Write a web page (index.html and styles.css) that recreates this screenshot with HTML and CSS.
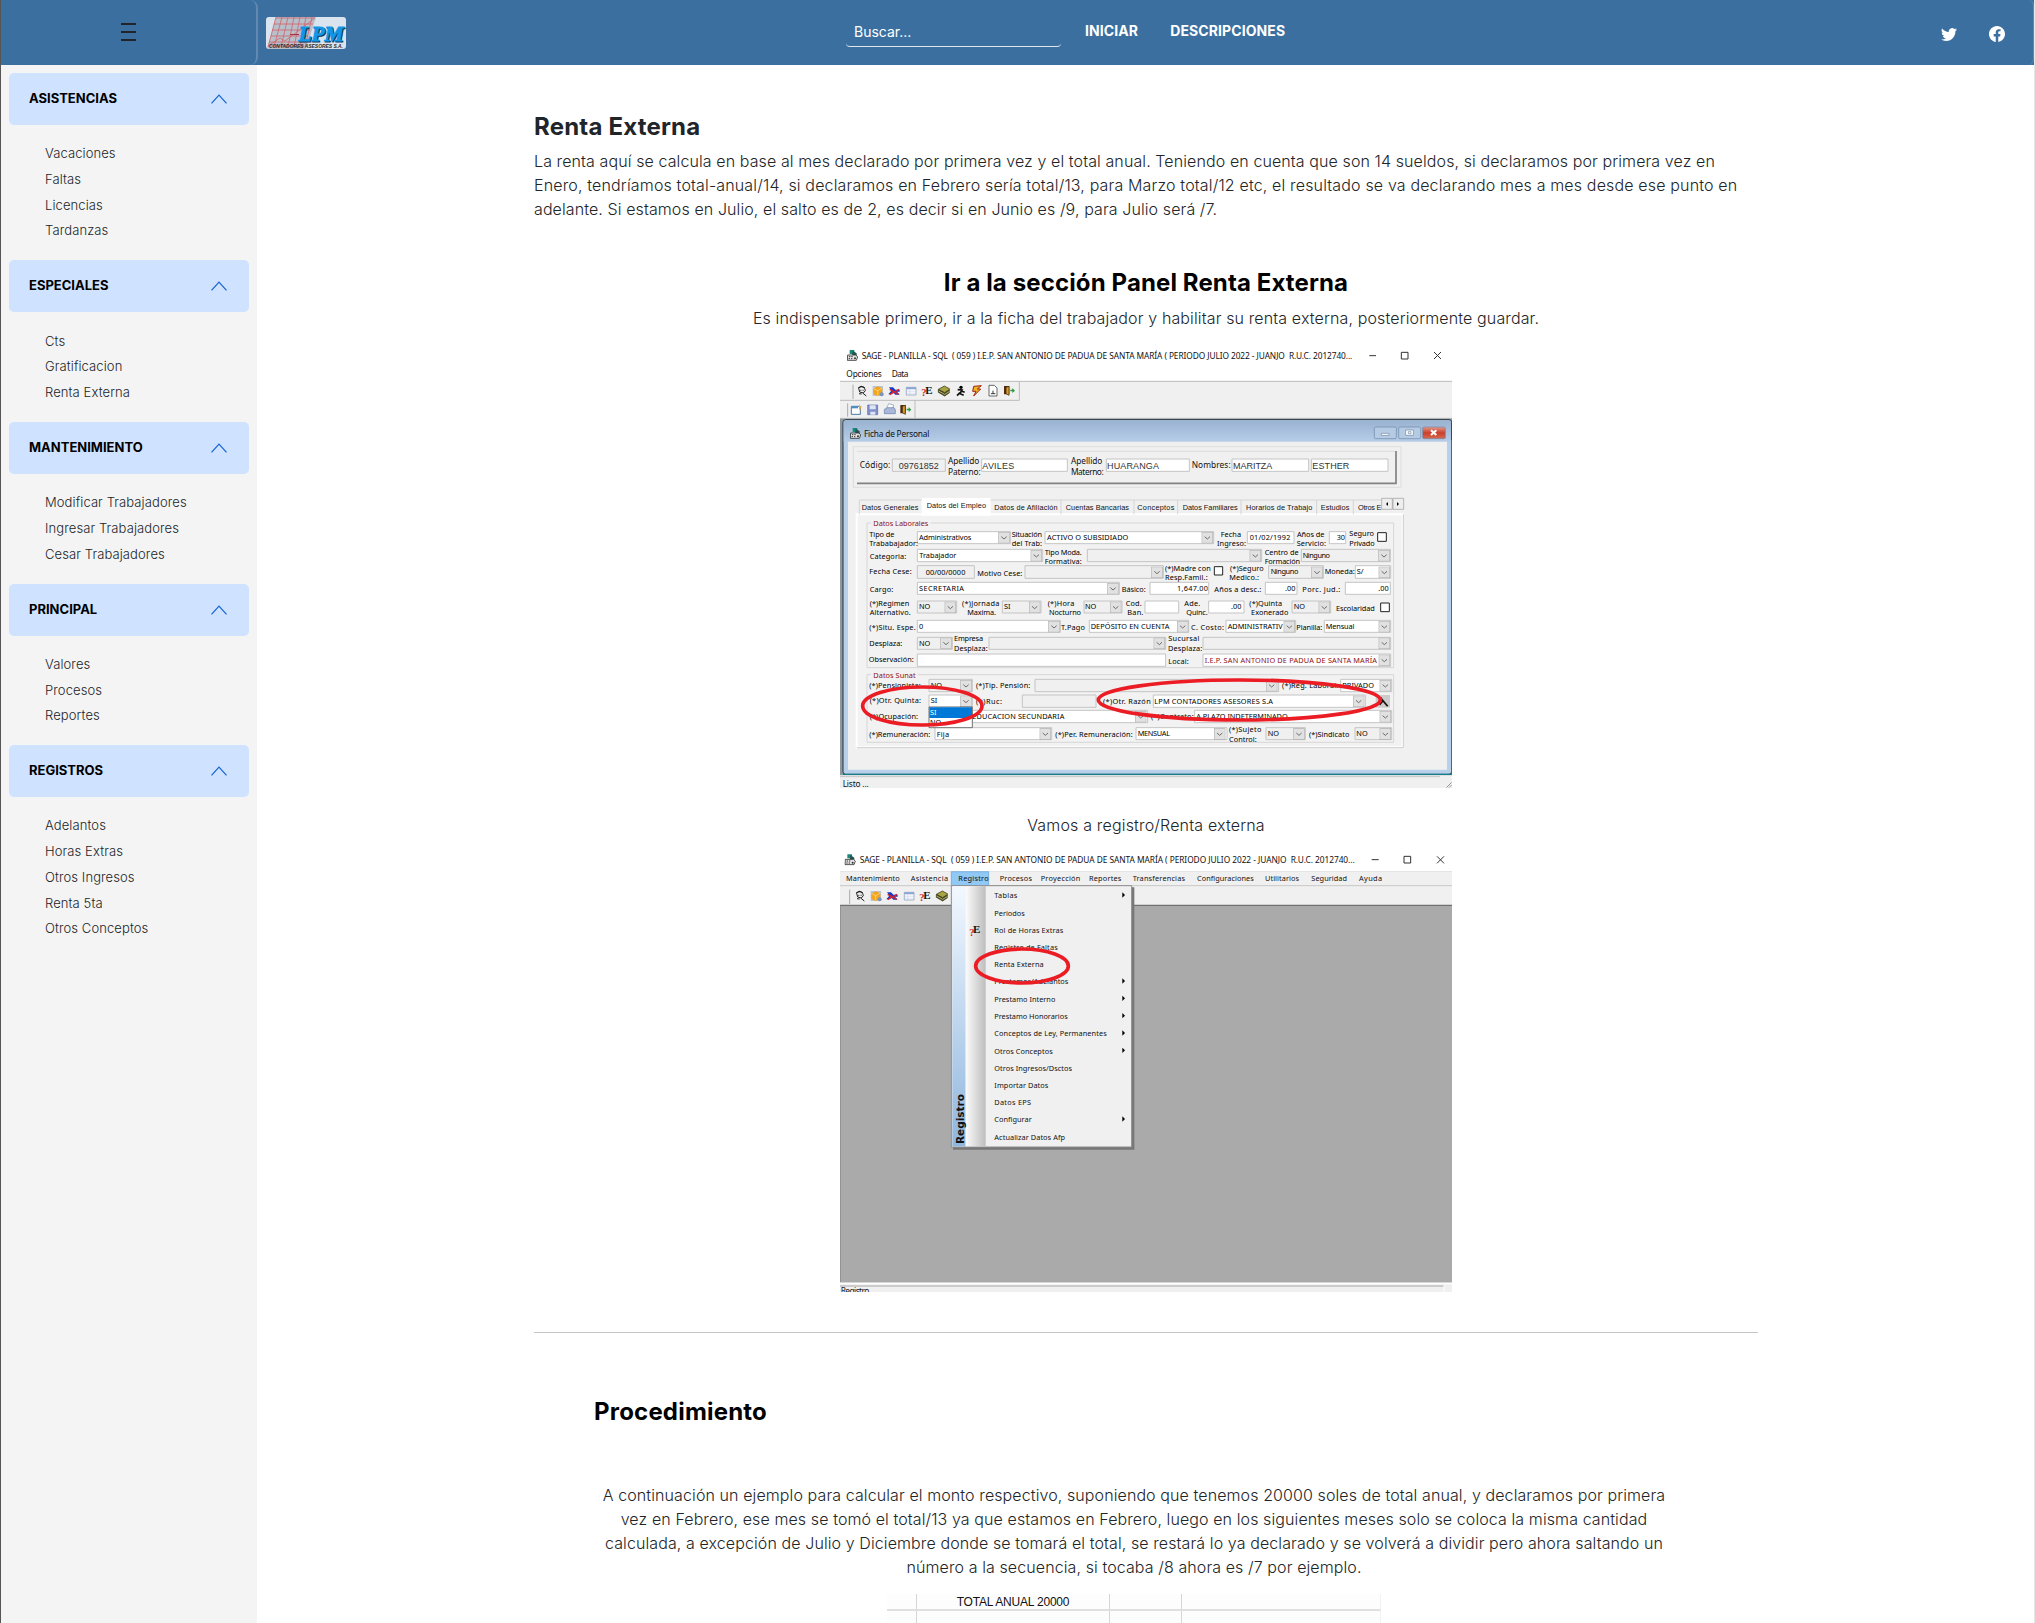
FILE: index.html
```html
<!DOCTYPE html>
<html lang="es">
<head>
<meta charset="utf-8">
<title>Renta Externa</title>
<link rel="stylesheet" href="styles.css">
</head>
<body>
<svg class="defs" aria-hidden="true">
  <defs>
    <symbol id="chevron" viewBox="0 0 16 16"><path fill="none" stroke="#1463d6" stroke-width="1.200" d="M.5 12.3 8 4.200l7.500 8.100"/></symbol>
    <symbol id="dd" viewBox="0 0 34 34"><path d="M0 0h34v34H0z" fill="#e1e1e1" stroke="#a9a9a9" stroke-width="3"/><path d="m9 14 8 7 8-7" fill="none" stroke="#555" stroke-width="2.500"/></symbol>
    <symbol id="appicon" viewBox="0 0 36 36"><path d="M9 2h14v12H9z" fill="#178a7a"/><path d="m18 4 12 8v8h-14z" fill="#28544f"/><path d="M3 17h25l5 6-4 10H2z" fill="#e4e4e4" stroke="#333" stroke-width="2.500"/><path d="M7 22h14M6 28h14" stroke="#333" stroke-width="3" stroke-dasharray="4 3"/><circle cx="25" cy="27" r="3" fill="#333"/></symbol>
    <symbol id="door" viewBox="0 0 36 32"><path d="M2 2h16v25H2z" fill="#542b12"/><path d="m8 6 9-3v27l-9-5z" fill="#e39a20" stroke="#222" stroke-width="2"/><path d="M21 13h6v-5l8 8-8 7v-5h-6z" fill="#2a9b43"/></symbol>
    <symbol id="tools" viewBox="0 0 280 40">
      <path d="M7 12q8-12 18 0l2 7-6 7-11-3z" fill="#eee" stroke="#222" stroke-width="3"/><path d="M6 11q10-8 19 0" fill="none" stroke="#222" stroke-width="4"/><path d="M12 18h3M19 18h3M8 28l8 1M20 27l10 8" stroke="#222" stroke-width="3"/>
      <path d="M49 5h31v30H49z" fill="#b9c5d6"/><path d="m51 13 13-7 14 6v17l-14 6-13-6z" fill="#f3a51c"/><path d="m52 13 12 6 13-7M64 19v14" stroke="#ffe2a0" stroke-width="2" fill="none"/><circle cx="76" cy="30" r="6" fill="#7894bd"/>
      <path d="M98 9h12l7 7h13v6h-8l8 9h-13l-7-7-8 6h-6l9-11z" fill="#1638c8"/><path d="m100 31 28-16M100 15l27 15" stroke="#d4232c" stroke-width="4"/>
      <path d="M150 9h29v23h-29z" fill="#f7faff" stroke="#8093b4" stroke-width="2"/><path d="M150 9h29v6h-29z" fill="#8aa6d4"/><path d="M160 15v17M150 21h29M150 27h29" stroke="#b0bdd2"/>
      <text class="q" x="195" y="36">?</text><text class="e" x="207" y="29">E</text>
      <path d="m246 15 18-10 17 9-16 11z" fill="#a7a444" stroke="#28280c" stroke-width="2"/><path d="m246 16 19 10 16-10v8l-16 11-19-11z" fill="#54551b" stroke="#28280c" stroke-width="2"/><path d="m247 20 18 10 15-9" fill="none" stroke="#d8d8a0" stroke-width="2"/>
    </symbol>
    <linearGradient id="caption" x1="0" y1="0" x2="0" y2="1"><stop offset="0" stop-color="#9ab3d1"/><stop offset="1" stop-color="#b5cde8"/></linearGradient>
    <linearGradient id="close" x1="0" y1="0" x2="0" y2="1"><stop offset="0" stop-color="#e59a8c"/><stop offset=".5" stop-color="#c9402c"/><stop offset="1" stop-color="#d8694f"/></linearGradient>
    <linearGradient id="menuband" x1="0" y1="0" x2="0" y2="1"><stop offset="0" stop-color="#f2f8ff"/><stop offset="1" stop-color="#8fb6de"/></linearGradient>
    <linearGradient id="menugutter"><stop offset="0" stop-color="#fcfcfc"/><stop offset="1" stop-color="#bdbdbd"/></linearGradient>
  </defs>
</svg>

<header class="topbar">
  <div class="topbar-side"><button class="burger" aria-label="Menu"><span></span><span></span><span></span></button></div>
  <div class="topbar-main">
    <svg class="logo" viewBox="0 0 80 32" role="img" aria-label="LPM Contadores Asesores">
      <rect width="80" height="32" rx="3" fill="#dae4ee"/>
      <path d="M10 0h40L40 32H1z" fill="#b9c0ca"/>
      <path d="M10 1h39M8 7h39M6 13h38M5 19h37M3 25h36M2 29h36M10 0 2 30M16 0 8 30M22 0l-7 30M28 0l-6 30M34 0l-6 30M40 0l-6 30M46 0l-7 30M2 29l12-8 5 3L49 1" fill="none" stroke="#d0626c" stroke-width=".8"/>
      <path d="M24 17.500h9" stroke="#9a3744"/>
      <text class="logo-shadow" x="33.500" y="25" textLength="45" lengthAdjust="spacingAndGlyphs">LPM</text>
      <text class="logo-name" x="32.500" y="24" textLength="45" lengthAdjust="spacingAndGlyphs">LPM</text>
      <text class="logo-sub" x="3" y="31" textLength="74" lengthAdjust="spacingAndGlyphs">CONTADORES ASESORES S.A.</text>
    </svg>
    <input class="search" type="text" placeholder="Buscar...">
    <nav class="topnav"><a>INICIAR</a><a>DESCRIPCIONES</a></nav>
    <div class="social">
      <svg width="16" height="16" viewBox="0 0 16 16" fill="#fff"><path d="M5.026 15c6.038 0 9.341-5.003 9.341-9.334 0-.14 0-.282-.006-.422A6.685 6.685 0 0 0 16 3.542a6.658 6.658 0 0 1-1.889.518 3.301 3.301 0 0 0 1.447-1.817 6.533 6.533 0 0 1-2.087.793A3.286 3.286 0 0 0 7.875 6.030a9.325 9.325 0 0 1-6.767-3.429 3.289 3.289 0 0 0 1.018 4.382A3.323 3.323 0 0 1 .64 6.575v.045a3.288 3.288 0 0 0 2.632 3.218 3.203 3.203 0 0 1-.865.115 3.230 3.230 0 0 1-.614-.057 3.283 3.283 0 0 0 3.067 2.277A6.588 6.588 0 0 1 .780 13.580a6.320 6.320 0 0 1-.780-.045A9.344 9.344 0 0 0 5.026 15z"/></svg>
      <svg width="16" height="16" viewBox="0 0 16 16" fill="#fff"><path d="M16 8.049c0-4.446-3.582-8.050-8-8.050C3.580 0-.002 3.603-.002 8.050c0 4.017 2.926 7.347 6.750 7.951v-5.625h-2.030V8.050H6.750V6.275c0-2.017 1.195-3.131 3.022-3.131.876 0 1.791.157 1.791.157v1.980h-1.009c-.993 0-1.303.621-1.303 1.258v1.510h2.218l-.354 2.326H9.250V16c3.824-.604 6.750-3.934 6.750-7.951z"/></svg>
    </div>
  </div>
</header>

<div class="layout">
  <aside class="sidebar">
    <section><h2><span>ASISTENCIAS</span><svg><use href="#chevron"/></svg></h2><ul><li>Vacaciones</li><li>Faltas</li><li>Licencias</li><li>Tardanzas</li></ul></section>
    <section><h2><span>ESPECIALES</span><svg><use href="#chevron"/></svg></h2><ul><li>Cts</li><li>Gratificacion</li><li>Renta Externa</li></ul></section>
    <section><h2><span>MANTENIMIENTO</span><svg><use href="#chevron"/></svg></h2><ul><li>Modificar Trabajadores</li><li>Ingresar Trabajadores</li><li>Cesar Trabajadores</li></ul></section>
    <section><h2><span>PRINCIPAL</span><svg><use href="#chevron"/></svg></h2><ul><li>Valores</li><li>Procesos</li><li>Reportes</li></ul></section>
    <section><h2><span>REGISTROS</span><svg><use href="#chevron"/></svg></h2><ul><li>Adelantos</li><li>Horas Extras</li><li>Otros Ingresos</li><li>Renta 5ta</li><li>Otros Conceptos</li></ul></section>
  </aside>

  <main class="content">
    <h1>Renta Externa</h1>
    <p class="intro">La renta aquí se calcula en base al mes declarado por primera vez y el total anual. Teniendo en cuenta que son 14 sueldos, si declaramos por primera vez en<br><span class="loose">Enero, tendríamos total-anual/14, si declaramos en Febrero sería total/13, para Marzo total/12 etc, el resultado se va declarando mes a mes desde ese punto en</span><br>adelante. Si estamos en Julio, el salto es de 2, es decir si en Junio es /9, para Julio será /7.</p>
    <h3 class="step-title">Ir a la sección Panel Renta Externa</h3>
    <p class="step-text">Es indispensable primero, ir a la ficha del trabajador y habilitar su renta externa, posteriormente guardar.</p>

    <svg class="shot" viewBox="15 18 1836 1326">
      <path d="M15 18h1836v1326H15z" fill="#f0f0f0"/>
      <path d="M15 18h1836v105H15z" fill="#fff"/>
      <path d="M15 124h1836M15 181h538v-56M15 235h1836M240 181v54" stroke="#bbb" stroke-width="3" fill="none"/>
      <use href="#appicon" x="35" y="28" width="36" height="36"/>
      <text class="ui" x="80" y="56" textLength="1472">SAGE - PLANILLA - SQL&#160; ( 059 ) I.E.P. SAN ANTONIO DE PADUA DE SANTA MARÍA ( PERIODO JULIO 2022 - JUANJO&#160; R.U.C. 2012740...</text>
      <path d="M1603 47h20M1699 37h20v20h-20zM1797 36l21 21m0-21-21 21" stroke="#333" stroke-width="3" fill="none"/>
      <text class="ui" x="34" y="110" textLength="106">Opciones</text><text class="ui" x="170" y="110" textLength="50">Data</text>
      <path d="M54 134v43M38 190v40" stroke="#aaa" stroke-width="3"/>
      <use href="#tools" x="64" y="133" width="280" height="40"/>
      <circle cx="378" cy="142" r="5"/><path d="m368 149 13 1-6 11 11 5M366 167l9-9M379 153l10 4" fill="none" stroke="#111" stroke-width="5"/>
      <path d="m416 139 23-2-12 10h10l-21 21 7-14h-10z" fill="#ecb51d" stroke="#a2221b" stroke-width="3"/>
      <path d="M462 136h16l8 8v24h-24z" fill="#fff" stroke="#222" stroke-width="2"/><path d="M468 161h13m-7-9v9" stroke="#333" stroke-width="3"/>
      <use href="#door" x="505" y="136" width="36" height="32"/>
      <path d="M49 199h27v24H49z" fill="#fff" stroke="#4677a3" stroke-width="3"/><path d="M49 199h20v6H49z" fill="#4c90bf"/><path d="m72 193 3 6 6 1-5 5 1 7-5-3" fill="#ecae37"/>
      <path d="M98 195h30v29H98z" fill="#8190cb" stroke="#596aa8" stroke-width="2"/><path d="M104 196h18v12h-18zM106 215h15v9h-15z" fill="#dfe5f3"/>
      <path d="m155 204 6-13 15 4-3 12z" fill="#fff" stroke="#7e90b8" stroke-width="2"/><path d="m148 208 10-5h19l4 6v12h-33z" fill="#aab8d8" stroke="#657caf" stroke-width="2"/>
      <use href="#door" x="194" y="193" width="36" height="32"/>
      <path d="M15 236h1836v1070H15z" fill="#8d979e"/>
      <rect x="24" y="239" width="1826" height="1064" rx="8" fill="#b8d0ea" stroke="#24333b" stroke-width="3"/>
      <path d="M26 242h1822v63H26z" fill="url(#caption)"/><path d="M24 1303h1826V300" fill="none" stroke="#15808a" stroke-width="4"/>
      <path d="M39 305h1797v984H39z" fill="#f0f0f0"/>
      <use href="#appicon" x="44" y="262" width="36" height="36"/><text class="ui" x="87" y="290" textLength="196">Ficha de Personal</text>
      <g stroke="#6d86a3" stroke-width="2"><rect x="1618" y="261" width="66" height="35" rx="4" fill="#b5cbe3"/><rect x="1691" y="261" width="66" height="35" rx="4" fill="#b5cbe3"/><rect x="1763" y="261" width="68" height="35" rx="4" fill="url(#close)"/><path d="M1639 280h23v6h-23zM1712 270h23v16h-23zM1720 275h8v6h-8z" fill="#fff"/></g>
      <path d="m1788 271 16 14m0-14-16 14" stroke="#fff" stroke-width="6"/>
      <path d="M55 320h1643v122H55zM66 334h1617" fill="none" stroke="#ddd" stroke-width="3"/><path d="M66 430h1617v-97" fill="none" stroke="#808080" stroke-width="5"/>
      <text class="ui" x="74" y="384" textLength="92">Código:</text><text class="ui" x="339" y="373" textLength="94">Apellido</text><text class="ui" x="339" y="405" textLength="98">Paterno:</text><text class="ui" x="708" y="373" textLength="94">Apellido</text><text class="ui" x="708" y="405" textLength="98">Materno:</text><text class="ui" x="1070" y="384" textLength="117">Nombres:</text>
      <path class="fld off" d="M172 357h159v37H172z"/><path class="fld" d="M440 357h257v37H440zM814 357h249v37H814zM1191 357h230v37h-230zM1429 357h230v37h-230z"/>
      <g class="arial"><text x="191" y="386" textLength="120">09761852</text><text x="442" y="386" textLength="96">AVILES</text><text x="816" y="386" textLength="156">HUARANGA</text><text x="1194" y="386" textLength="118">MARITZA</text><text x="1432" y="386" textLength="111">ESTHER</text></g>
      <path d="M65 523h1638v699H65z" fill="#f2f2f2" stroke="#fff" stroke-width="6"/><path d="M66 1223h1639V523" fill="none" stroke="#ccc" stroke-width="3"/>
      <path d="M73 480v43M678 480v43M897 480v43M1028 480v43M1218 480v43M1445 480v43M1555 480v43M73 480h1567" stroke="#d5d5d5" stroke-width="3"/><path d="M260 474h207v53H260z" fill="#fff"/>
      <g class="tab"><text x="80" y="509" textLength="170">Datos Generales</text><text x="275" y="505" textLength="178">Datos del Empleo</text><text x="478" y="509" textLength="190">Datos de Afiliación</text><text x="692" y="509" textLength="190">Cuentas Bancarias</text><text x="907" y="509" textLength="111">Conceptos</text><text x="1043" y="509" textLength="165">Datos Familiares</text><text x="1233" y="509" textLength="199">Horarios de Trabajo</text><text x="1457" y="509" textLength="86">Estudios</text><text x="1569" y="509" textLength="70">Otros E</text></g>
      <path d="M1640 475h32v33h-32zM1674 475h32v33h-32z" fill="#eee" stroke="#999" stroke-width="2"/><path d="m1659 486-6 6 6 6zM1686 486l6 6-6 6z"/>
      <path d="M96 549h1580v434H96zM96 1004h1580v203H96z" fill="none" stroke="#d6d6d6" stroke-width="3"/><path d="M108 540h178v20H108zM108 994h140v20H108z" fill="#f2f2f2"/>
      <path class="fld" d="M247 575h279v36H247zM630 575h506v36H630zM1237 575h140v36h-140zM1483 575h49v36h-49zM247 628h376v37H247zM1561 677h106v38h-106zM247 727h606v36H247zM945 727h176v36H945zM1291 727h95v36h-95zM1531 727h135v36h-135zM930 783h101v36H930zM1121 783h106v36h-106zM247 841h429v36H247zM763 841h298v36H763zM1173 841h209v36h-209zM1468 841h199v36h-199zM247 942h745v37H247zM1104 942h563v37h-563zM1517 1018h153v37h-153zM282 1065h130v37H282zM955 1065h636v37H955zM412 1111h526v37H412zM1079 1111h591v37h-591zM300 1163h350v36H300zM903 1163h273v36H903z"/>
      <path class="fld off" d="M757 628h523v37H757zM1399 628h267v37h-267zM247 677h171v38H247zM570 677h415v38H570zM1301 677h164v38h-164zM247 783h118v36H247zM502 783h116v36H502zM747 783h114v36H747zM1371 783h116v36h-116zM247 892h105v36H247zM462 892h530v36H462zM1104 892h563v36h-563zM282 1018h130v37H282zM600 1018h731v37H600zM562 1065h221v37H562zM1293 1163h118v36h-118zM1560 1163h110v36h-110z"/>
      <g><use href="#dd" x="490" y="576" width="34" height="34"/><use href="#dd" x="1100" y="576" width="34" height="34"/><use href="#dd" x="587" y="630" width="34" height="34"/><use href="#dd" x="1244" y="630" width="34" height="34"/><use href="#dd" x="1630" y="630" width="34" height="34"/><use href="#dd" x="949" y="680" width="34" height="34"/><use href="#dd" x="1429" y="680" width="34" height="34"/><use href="#dd" x="1631" y="680" width="34" height="34"/><use href="#dd" x="817" y="729" width="34" height="34"/><use href="#dd" x="329" y="785" width="34" height="34"/><use href="#dd" x="582" y="785" width="34" height="34"/><use href="#dd" x="825" y="785" width="34" height="34"/><use href="#dd" x="1451" y="785" width="34" height="34"/><use href="#dd" x="640" y="843" width="34" height="34"/><use href="#dd" x="1026" y="843" width="34" height="34"/><use href="#dd" x="1346" y="843" width="34" height="34"/><use href="#dd" x="1631" y="843" width="34" height="34"/><use href="#dd" x="316" y="893" width="34" height="34"/><use href="#dd" x="956" y="893" width="34" height="34"/><use href="#dd" x="1631" y="893" width="34" height="34"/><use href="#dd" x="1631" y="944" width="34" height="34"/><use href="#dd" x="376" y="1020" width="34" height="34"/><use href="#dd" x="1293" y="1020" width="34" height="34"/><use href="#dd" x="1634" y="1020" width="34" height="34"/><use href="#dd" x="376" y="1067" width="34" height="34"/><use href="#dd" x="1554" y="1067" width="34" height="34"/><use href="#dd" x="900" y="1113" width="34" height="34"/><use href="#dd" x="1634" y="1113" width="34" height="34"/><use href="#dd" x="614" y="1165" width="34" height="34"/><use href="#dd" x="1137" y="1165" width="34" height="34"/><use href="#dd" x="1375" y="1165" width="34" height="34"/><use href="#dd" x="1634" y="1165" width="34" height="34"/></g>
      <path d="M1628 578h26v26h-26zM1138 680h25v25h-25zM1637 789h26v26h-26z" fill="#fff" stroke="#222" stroke-width="3"/>
      <g class="maroon"><text x="115" y="556" textLength="165">Datos Laborales</text><text x="115" y="1012" textLength="127">Datos Sunat</text><text x="1109" y="967" textLength="517">I.E.P. SAN ANTONIO DE PADUA DE SANTA MARÍA</text></g>
      <g class="frm">
        <text x="103" y="588" textLength="75">Tipo de</text><text x="103" y="617" textLength="146">Trababajador:</text><text x="252" y="599" textLength="157">Administrativos</text><text x="530" y="588" textLength="91">Situación</text><text x="530" y="617" textLength="91">del Trab:</text><text x="636" y="599" textLength="244">ACTIVO O SUBSIDIADO</text><text x="1157" y="588" textLength="61">Fecha</text><text x="1146" y="617" textLength="87">Ingreso:</text><text x="1244" y="599" textLength="122">01/02/1992</text><text x="1386" y="588" textLength="82">Años de</text><text x="1385" y="617" textLength="88">Servicio:</text><text x="1505" y="599">30</text><text x="1543" y="587" textLength="74">Seguro</text><text x="1543" y="616" textLength="76">Privado</text>
        <text x="104" y="655" textLength="110">Categoria:</text><text x="253" y="653" textLength="111">Trabajador</text><text x="629" y="642" textLength="111">Tipo Moda.</text><text x="629" y="670" textLength="111">Formativa:</text><text x="1289" y="642" textLength="102">Centro de</text><text x="1289" y="670" textLength="106">Formación</text><text x="1403" y="653" textLength="82">Ninguno</text>
        <text x="103" y="701" textLength="127">Fecha Cese:</text><text x="272" y="702" textLength="119">00/00/0000</text><text x="427" y="706" textLength="135">Motivo Cese:</text><text x="990" y="690" textLength="137">(*)Madre con</text><text x="990" y="718" textLength="128">Resp.Famil.:</text><text x="1185" y="690" textLength="101">(*)Seguro</text><text x="1183" y="718" textLength="89">Medico.:</text><text x="1307" y="701" textLength="83">Ninguno</text><text x="1469" y="701" textLength="90">Moneda:</text><text x="1565" y="701">S/</text>
        <text x="104" y="755" textLength="71">Cargo:</text><text x="252" y="751" textLength="135">SECRETARIA</text><text x="860" y="755" textLength="72">Básico:</text><text x="1026" y="751" textLength="93">1,647.00</text><text x="1138" y="755" textLength="141">Años a desc.:</text><text x="1350" y="751">.00</text><text x="1402" y="755" textLength="114">Porc. Jud.:</text><text x="1630" y="751">.00</text>
        <text x="104" y="797" textLength="119">(*)Regimen</text><text x="104" y="824" textLength="123">Alternativo.</text><text x="252" y="806">NO</text><text x="381" y="797" textLength="112">(*)Jornada</text><text x="397" y="824" textLength="86">Maxima.</text><text x="507" y="806">SI</text><text x="638" y="797" textLength="80">(*)Hora</text><text x="642" y="824" textLength="96">Nocturno</text><text x="750" y="806">NO</text><text x="872" y="797" textLength="48">Cod.</text><text x="877" y="824" textLength="48">Ban.</text><text x="1048" y="797" textLength="48">Ade.</text><text x="1054" y="824" textLength="64">Quinc.</text><text x="1188" y="806">.00</text><text x="1243" y="797" textLength="98">(*)Quinta</text><text x="1248" y="824" textLength="112">Exonerado</text><text x="1376" y="806">NO</text><text x="1503" y="810" textLength="116">Escolaridad</text>
        <text x="103" y="867" textLength="139">(*)Situ. Espe.</text><text x="252" y="864">0</text><text x="678" y="867" textLength="72">T.Pago</text><text x="767" y="864" textLength="236">DEPÓSITO EN CUENTA</text><text x="1068" y="867" textLength="99">C. Costo:</text><text x="1178" y="864" textLength="165">ADMINISTRATIV</text><text x="1384" y="867" textLength="78">Planilla:</text><text x="1472" y="864" textLength="86">Mensual</text>
        <text x="103" y="917" textLength="99">Desplaza:</text><text x="252" y="915">NO</text><text x="357" y="902" textLength="87">Empresa</text><text x="357" y="930" textLength="101">Desplaza:</text><text x="1000" y="902" textLength="93">Sucursal</text><text x="999" y="930" textLength="103">Desplaza:</text>
        <text x="101" y="965" textLength="135">Observación:</text><text x="1000" y="969" textLength="61">Local:</text>
        <text x="103" y="1043" textLength="154">(*)Pensionista:</text><text x="287" y="1041">NO</text><text x="423" y="1043" textLength="163">(*)Tip. Pensión:</text><text x="1341" y="1043" textLength="169">(*)Reg. Laboral:</text><text x="1522" y="1041" textLength="95">PRIVADO</text>
        <text x="104" y="1088" textLength="154">(*)Otr. Quinta:</text><text x="287" y="1088">SI</text><text x="423" y="1091" textLength="78">(*)Ruc:</text><text x="804" y="1091" textLength="143">(*)Otr. Razón</text><text x="958" y="1090" textLength="356">LPM CONTADORES ASESORES S.A</text>
        <text x="104" y="1134" textLength="145">(*)Ocupación:</text><text x="412" y="1136" textLength="276">EDUCACION SECUNDARIA</text><text x="948" y="1134" textLength="128">(*)Contrato:</text><text x="1084" y="1136" textLength="274">A PLAZO INDETERMINADO</text>
        <text x="103" y="1190" textLength="183">(*)Remuneración:</text><text x="305" y="1188" textLength="37">Fija</text><text x="661" y="1190" textLength="232">(*)Per. Remuneración:</text><text x="908" y="1185" textLength="97">MENSUAL</text><text x="1182" y="1175" textLength="97">(*)Sujeto</text><text x="1182" y="1203" textLength="83">Control:</text><text x="1298" y="1185">NO</text><text x="1422" y="1190" textLength="121">(*)Sindicato</text><text x="1564" y="1185">NO</text>
      </g>
      <path d="M1622 1065h43v38h-43z" fill="#ccc"/><path d="m1636 1072 8 10 14 17M1644 1082l-10 12" stroke="#111" stroke-width="5" fill="none"/>
      <path d="M282 1101h130v62H282z" fill="#fff" stroke="#333" stroke-width="2"/><path d="M283 1102h128v32H283z" fill="#0078d7"/>
      <g class="frm"><text class="sel" x="285" y="1124">SI</text><text x="285" y="1154">NO</text></g>
      <ellipse class="mark" cx="262" cy="1098" rx="179" ry="57"/><ellipse class="mark" cx="1213" cy="1080" rx="423" ry="60"/>
      <path d="M15 1307h1836v37H15z" fill="#f0f0f0"/><path d="M15 1310h1800" stroke="#c4c4c4" stroke-width="3"/><text class="ui" x="23" y="1340" textLength="78">Listo ...</text><path d="m1834 1343 16-16m-8 16 8-8" stroke="#999" stroke-width="3"/>
    </svg>

    <p class="caption">Vamos a registro/Renta externa</p>

    <svg class="shot" viewBox="15 15 1836 1326">
      <path d="M15 15h1836v1326H15z" fill="#aaa"/><path d="M15 15h1836v64H15z" fill="#fff"/><path d="M15 79h1836v101H15z" fill="#f0f0f0"/>
      <path d="M15 122h1836" stroke="#c8c8c8" stroke-width="3"/><path d="M15 181h1836" stroke="#707070" stroke-width="4"/><path d="M15 181v1130" stroke="#888" stroke-width="4"/>
      <use href="#appicon" x="28" y="26" width="36" height="36"/>
      <text class="ui" x="74" y="54" textLength="1485">SAGE - PLANILLA - SQL&#160; ( 059 ) I.E.P. SAN ANTONIO DE PADUA DE SANTA MARÍA ( PERIODO JULIO 2022 - JUANJO&#160; R.U.C. 2012740...</text>
      <path d="M1610 44h21M1707 34h20v20h-20zM1806 34l21 21m0-21-21 21" stroke="#333" stroke-width="3" fill="none"/>
      <path d="M349 80h112v42H349z" fill="#90c8f6" stroke="#5d9fd6" stroke-width="2"/>
      <g class="menu"><text x="33" y="106" textLength="161">Mantenimiento</text><text x="227" y="106" textLength="112">Asistencia</text><text x="370" y="106" textLength="91">Registro</text><text x="494" y="106" textLength="97">Procesos</text><text x="617" y="106" textLength="119">Proyección</text><text x="762" y="106" textLength="97">Reportes</text><text x="893" y="106" textLength="157">Transferencias</text><text x="1086" y="106" textLength="170">Configuraciones</text><text x="1290" y="106" textLength="102">Utilitarios</text><text x="1429" y="106" textLength="107">Seguridad</text><text x="1572" y="106" textLength="69">Ayuda</text></g>
      <path d="M44 134v43" stroke="#aaa" stroke-width="3"/><use href="#tools" x="58" y="133" width="280" height="40"/>
      <path d="M354 127h544v787H354z" fill="#777"/><path d="M349 122h541v784H349z" fill="#f0f0f0" stroke="#8c8c8c" stroke-width="3"/><path d="M352 124h40v780h-40z" fill="url(#menuband)"/><path d="M392 124h60v780h-60z" fill="url(#menugutter)"/>
      <text class="vertical" transform="translate(387 897) rotate(-90)" textLength="150" lengthAdjust="spacingAndGlyphs">Registro</text>
      <text class="q" x="403" y="272">?</text><text class="e" x="414" y="265">E</text>
      <g class="menu"><text x="478" y="158" textLength="69">Tablas</text><text x="478" y="210" textLength="91">Periodos</text><text x="478" y="262" textLength="207">Rol de Horas Extras</text><text x="478" y="313" textLength="190">Registro de Faltas</text><text x="478" y="365" textLength="148">Renta Externa</text><text x="478" y="416" textLength="222">Prestamos/Adelantos</text><text x="478" y="468" textLength="183">Prestamo Interno</text><text x="478" y="520" textLength="220">Prestamo Honorarios</text><text x="478" y="572" textLength="337">Conceptos de Ley, Permanentes</text><text x="478" y="624" textLength="175">Otros Conceptos</text><text x="478" y="675" textLength="233">Otros Ingresos/Dsctos</text><text x="478" y="727" textLength="162">Importar Datos</text><text x="478" y="779" textLength="110">Datos EPS</text><text x="478" y="830" textLength="112">Configurar</text><text x="478" y="882" textLength="212">Actualizar Datos Afp</text></g>
      <path d="m862 142 8 8-8 8zM862 400l8 8-8 8zM862 452l8 8-8 8zM862 504l8 8-8 8zM862 556l8 8-8 8zM862 608l8 8-8 8zM862 814l8 8-8 8z"/>
      <ellipse class="mark" cx="561" cy="363" rx="139" ry="51"/>
      <path d="M15 1314h1836v27H15z" fill="#f0f0f0"/><path d="M15 1315h1836" stroke="#fff" stroke-width="5"/><path d="M15 1323h1812" stroke="#ccc" stroke-width="6"/><path d="M1827 1320v24" stroke="#fff" stroke-width="3"/><text class="ui" x="17" y="1347" textLength="86">Registro</text>
    </svg>

    <hr>
    <section class="procedure">
      <h3>Procedimiento</h3>
      <p>A continuación un ejemplo para calcular el monto respectivo, suponiendo que tenemos 20000 soles de total anual, y declaramos por primera<br>vez en Febrero, ese mes se tomó el total/13 ya que estamos en Febrero, luego en los siguientes meses solo se coloca la misma cantidad<br>calculada, a excepción de Julio y Diciembre donde se tomará el total, se restará lo ya declarado y se volverá a dividir pero ahora saltando un<br>número a la secuencia, si tocaba /8 ahora es /7 por ejemplo.</p>
      <div class="sheet"><span></span><span>TOTAL ANUAL 20000</span><span></span><span></span><span></span><span></span><span></span><span></span></div>
    </section>
  </main>
</div>
</body>
</html>
```
FILE: styles.css
```css
* { box-sizing: border-box; }
body {
  margin: 0;
  height: 1623px;
  overflow: hidden;
  border-left: 1px solid #555;
  border-right: 1px solid #e6e6e6;
  font-family: Inter, sans-serif;
  color: #212529;
  background: #fff;
}
.defs { position: absolute; width: 0; height: 0; }

.topbar { display: flex; height: 65px; background: #3b6fa0; }
.topbar-side {
  width: 257px;
  display: flex;
  justify-content: center;
  padding-top: 23px;
  border-right: 2px solid #6189b1;
  border-radius: 0 8px 8px 0;
}
.burger { width: 15px; height: 18px; padding: 0; border: 0; background: none; display: flex; flex-direction: column; justify-content: space-between; }
.burger span { width: 15px; height: 2px; background: #212529; }
.topbar-main { flex: 1; display: flex; align-items: flex-start; padding: 17px 28px 0 8px; border-right: 1px solid #6189b1; border-radius: 0 6px 6px 0; }
.logo { width: 80px; height: 32px; flex: none; }
.logo-name, .logo-shadow { font: italic bold 22px "Liberation Serif", serif; fill: #1196e8; stroke: #1196e8; stroke-width: 1.1; }
.logo-shadow { fill: #123653; stroke: #123653; }
.logo-sub { font: italic bold 5.5px "Liberation Sans", sans-serif; fill: #2b2b2b; }
.search {
  width: 215px;
  height: 31px;
  margin: -1px 0 0 500px;
  padding: 0 8px;
  border: 0;
  border-bottom: 1px solid #dfe6ee;
  border-radius: 4px;
  background: transparent;
  font: 14px Inter, sans-serif;
  color: #fff;
}
.search::placeholder { color: #fff; opacity: 1; }
.topnav { display: flex; gap: 32px; margin-left: 24px; font-size: 14px; font-weight: 700; line-height: 28px; letter-spacing: .1px; color: #fff; }
.social { display: flex; gap: 32px; margin: 9px 0 0 auto; }

.layout { display: flex; height: 1558px; }
.sidebar { width: 256px; flex: none; padding: 8px; background: #f4f4f4; }
.sidebar h2 {
  display: flex;
  justify-content: space-between;
  align-items: center;
  width: 240px;
  height: 52px;
  margin: 0;
  padding: 0 22px 0 20px;
  border-radius: 5px;
  background: #cfe2ff;
  color: #000;
  font-size: 13px;
  font-weight: 700;
}
.sidebar h2 span { padding-bottom: 2px; }
.sidebar h2 svg { width: 16px; height: 16px; }
.sidebar ul { list-style: none; margin: 0; padding: 16.2px 0 16.2px 36px; font-size: 13px; font-weight: 300; line-height: 25.75px; letter-spacing: .1px; }

.content { width: 1224px; margin-left: 277px; padding-top: 45px; flex: none; }
h1, h3 { margin: 0; font-size: 24px; font-weight: 700; line-height: 34px; letter-spacing: .2px; }
h3 { color: #000; }
p { margin: 0; font-size: 16px; font-weight: 300; line-height: 24px; letter-spacing: .1px; white-space: nowrap; }
.intro { margin-top: 5px; }
.loose { letter-spacing: .155px; }
.step-title { margin-top: 45px; text-align: center; letter-spacing: .12px; }
.step-text { margin-top: 6px; text-align: center; letter-spacing: .13px; }
.shot { display: block; width: 612px; height: 442px; margin: 16px auto 0; }
.caption { margin-top: 25px; text-align: center; letter-spacing: .17px; }
.caption + .shot { margin-top: 13px; }
hr { margin: 40px 0 0; border: 0; border-top: 1px solid #c6c6c6; }
.procedure { width: 1080px; margin: 62px 0 0 60px; }
.procedure p { margin-top: 54px; text-align: center; }
.sheet { display: grid; grid-template-columns: 30px 193px 72px 199px; grid-template-rows: 17px 40px; width: 494px; margin: 15px auto 0; background: #fdfdfd; }
.sheet span { border-right: 1px solid #d6d6d6; border-bottom: 2px solid #e0e0e0; font: 12px/16px "Liberation Sans", sans-serif; letter-spacing: -.2px; color: #111; text-align: center; white-space: nowrap; }
.sheet span:nth-child(4n) { border-right-color: #f2f2f2; }

.ui { font: 25px "Noto Sans", sans-serif; fill: #111; }
.frm, .maroon { font: 22px "Noto Sans", sans-serif; fill: #000; transform: translateY(2px); }
.maroon { fill: #8b1020; }
.sel { fill: #fff; }
.tab { font: 22px "Liberation Sans", sans-serif; fill: #111; }
.menu { font: 22px "Noto Sans", sans-serif; fill: #111; transform: translateY(1.5px); }
.arial { font: 27px "Liberation Sans", sans-serif; fill: #333; }
.vertical { font: bold 32px "DejaVu Sans", sans-serif; fill: #111; }
.q { font: bold 32px "Liberation Serif", serif; fill: #d8202a; }
.e { font: bold 33px "Liberation Serif", serif; fill: #111; }
.fld { fill: #fff; stroke: #c4c4c4; stroke-width: 3; }
.fld.off { fill: #f0f0f0; }
.mark { fill: none; stroke: #ec1c24; stroke-width: 11; }
```
